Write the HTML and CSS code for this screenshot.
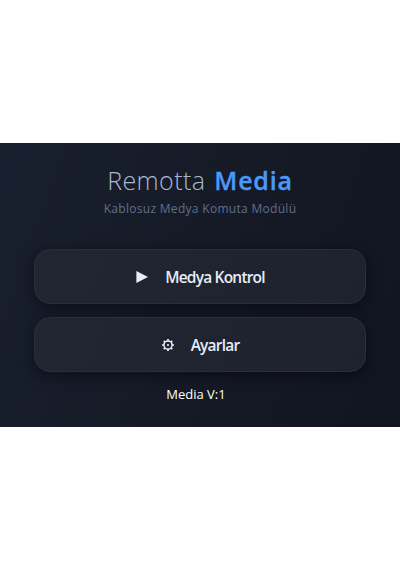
FILE: index.html
```html
<!DOCTYPE html>
<html lang="tr">
<head>
<meta charset="utf-8">
<title>Remotta Media</title>
<link rel="stylesheet" href="styles.css">
</head>
<body>
<main class="panel">
  <h1 class="title"><span class="brand">Remotta</span><strong class="product">Media</strong></h1>
  <p class="subtitle">Kablosuz Medya Komuta Modülü</p>
  <nav class="menu">
    <button class="item">
      <svg class="icon" viewBox="0 0 14 14"><path d="M1.4 1v12L13 7z" fill="currentColor"/></svg>
      <span class="label">Medya Kontrol</span>
    </button>
    <button class="item">
      <svg class="icon" viewBox="0 0 14 14"><g fill="none" stroke="currentColor"><circle cx="7" cy="7" r="4.1" stroke-width="1.5"/><path d="M7 1v2M7 11v2M1 7h2M11 7h2M2.8 2.8l1.3 1.3M9.9 9.9l1.3 1.3M2.8 11.2l1.3-1.3M9.9 4.1l1.3-1.3" stroke-width="1.7"/></g><circle cx="7" cy="7" r="1.1" fill="currentColor"/></svg>
      <span class="label">Ayarlar</span>
    </button>
  </nav>
  <p class="version">Media V:1</p>
</main>
</body>
</html>
```
FILE: styles.css
```css
* { box-sizing: border-box; }
body {
  margin: 0;
  height: 570px;
  padding-top: 143px;
  background: #fff;
  font-family: "Open Sans", "Noto Sans", sans-serif;
}
.panel {
  height: 284px;
  padding: 18px 34px 0;
  overflow: hidden;
  background: linear-gradient(110deg, #181f2e 0%, #151a26 50%, #11151f 100%);
  text-align: center;
}
.title {
  display: flex;
  justify-content: center;
  gap: 9px;
  margin: 0;
  font-size: 25px;
  line-height: 38px;
  font-weight: 300;
  letter-spacing: 0.4px;
}
.brand { color: #a9b8d0; }
.product { font-weight: 600; color: #4b99fb; letter-spacing: 0.8px; -webkit-text-stroke: 0.3px #4b99fb; }
.subtitle {
  margin: 0;
  font-size: 12px;
  line-height: 20px;
  letter-spacing: 0.3px;
  color: #626f89;
  white-space: nowrap;
}
.menu {
  display: flex;
  flex-direction: column;
  gap: 13px;
  margin-top: 30px;
}
.item {
  display: flex;
  align-items: center;
  justify-content: center;
  gap: 16px;
  height: 55px;
  padding: 0;
  border: 1px solid #292e3a;
  border-radius: 16px;
  background: linear-gradient(110deg, #212631, #1e222e);
  box-shadow: 0 4px 14px rgba(5, 6, 15, 0.55);
  color: #e6ecf8;
  font: 600 15.5px/22px "Open Sans", "Noto Sans", sans-serif;
}
.icon { width: 14px; height: 14px; }
.label { letter-spacing: -0.8px; white-space: nowrap; }
.version {
  margin: 12px 0 0;
  padding-right: 8px;
  font-size: 13px;
  line-height: 20px;
  color: #fff;
}
```
